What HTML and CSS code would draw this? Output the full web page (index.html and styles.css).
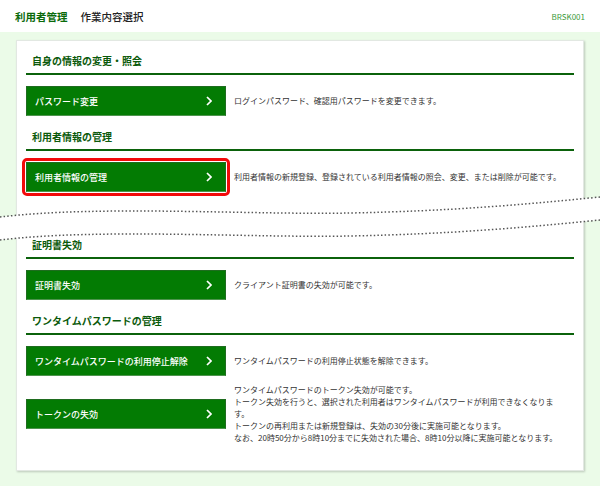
FILE: index.html
```html
<!DOCTYPE html>
<html lang="ja">
<head>
    <meta charset="UTF-8">
    <meta name="viewport" content="width=device-width, initial-scale=1.0">
    <title>作業内容選択</title>
    <link rel="stylesheet" href="styles.css">
</head>
<body>
    <!-- ヘッダー -->
    <div class="page-header">
        <span class="menu-name">利用者管理</span>
        <span class="page-title">作業内容選択</span>
        <span class="screen-id">BRSK001</span>
    </div>

    <div class="main">
        <div class="card">
            <h2 class="section-title">自身の情報の変更・照会</h2>
            <div class="menu-row">
                <a class="menu-btn" href="#">パスワード変更<svg class="chev" viewBox="0 0 6 10"><polyline points="1,1 5,5 1,9"/></svg></a>
                <p class="desc">ログインパスワード、確認用パスワードを変更できます。</p>
            </div>

            <h2 class="section-title">利用者情報の管理</h2>
            <div class="menu-row">
                <a class="menu-btn marked" href="#">利用者情報の管理<svg class="chev" viewBox="0 0 6 10"><polyline points="1,1 5,5 1,9"/></svg></a>
                <p class="desc">利用者情報の新規登録、登録されている利用者情報の照会、変更、または削除が可能です。</p>
            </div>

            <!-- 省略線 -->
            <div class="cut">
                <svg class="cut-line" viewBox="0 0 600 56" width="600" height="56">
                    <path class="cut-fill" d="M0,25 C100,13 250,23 350,21 S520,13 600,5 L600,28 C520,36 450,42 350,44 C250,46 100,36 0,48 Z"/>
                    <path class="cut-dots" d="M0,25 C100,13 250,23 350,21 S520,13 600,5"/>
                    <path class="cut-dots" d="M0,48 C100,36 250,46 350,44 S520,36 600,28"/>
                </svg>
            </div>

            <h2 class="section-title">証明書失効</h2>
            <div class="menu-row">
                <a class="menu-btn" href="#">証明書失効<svg class="chev" viewBox="0 0 6 10"><polyline points="1,1 5,5 1,9"/></svg></a>
                <p class="desc">クライアント証明書の失効が可能です。</p>
            </div>

            <h2 class="section-title">ワンタイムパスワードの管理</h2>
            <div class="menu-row">
                <a class="menu-btn" href="#">ワンタイムパスワードの利用停止解除<svg class="chev" viewBox="0 0 6 10"><polyline points="1,1 5,5 1,9"/></svg></a>
                <p class="desc">ワンタイムパスワードの利用停止状態を解除できます。</p>
            </div>
            <div class="menu-row">
                <a class="menu-btn" href="#">トークンの失効<svg class="chev" viewBox="0 0 6 10"><polyline points="1,1 5,5 1,9"/></svg></a>
                <p class="desc">ワンタイムパスワードのトークン失効が可能です。<br>トークン失効を行うと、選択された利用者はワンタイムパスワードが利用できなくなります。<br>トークンの再利用または新規登録は、失効の30分後に実施可能となります。<br>なお、20時50分から8時10分までに失効された場合、8時10分以降に実施可能となります。</p>
            </div>
        </div>
    </div>
</body>
</html>
```

FILE: styles.css
```css
/* 全体 */
body {
    margin: 0;
    font-family: "Noto Sans CJK JP", "Noto Sans", sans-serif;
    color: #333;
    background-color: #ebfbe8;
    min-height: 486px;
}

/* ヘッダー */
.page-header {
    height: 32px;
    background-color: #fff;
    display: flex;
    align-items: center;
    padding: 0 15px;
    font-size: 10.5px;
    font-weight: bold;
}
.menu-name {
    color: #0a6a0a;
    margin-right: 13px;
}
.page-title {
    color: #222;
    font-weight: 500;
}
.screen-id {
    margin-left: auto;
    font-size: 8px;
    font-weight: normal;
    color: #3b9b3b;
}

/* カード */
.main {
    padding: 8px 16px 17px;
}
.card {
    background-color: #fff;
    border: 1px solid #e2e8e2;
    box-shadow: 1px 1px 2px rgba(0, 0, 0, 0.2);
    padding: 12px 9px 26px 9px;
}

/* 見出し */
.section-title {
    margin: 13px 0 0;
    padding: 0 6px 4px;
    font-size: 10px;
    line-height: 16px;
    font-weight: bold;
    color: #0b5a0b;
    border-bottom: 2px solid #0b620b;
}
.card > .section-title:first-child {
    margin-top: 0;
}

/* メニュー行 */
.menu-row {
    display: flex;
    align-items: center;
    margin-top: 11px;
}
.menu-row + .menu-row {
    margin-top: 8px;
}
.menu-btn {
    position: relative;
    flex: 0 0 auto;
    box-sizing: border-box;
    width: 200px;
    height: 30px;
    display: flex;
    align-items: center;
    padding: 0 8px;
    background-color: #037b03;
    border: 1px solid #1f6c1f;
    border-bottom-color: #4d944d;
    color: #fff;
    font-size: 9px;
    font-weight: 500;
    text-decoration: none;
}
.chev {
    width: 6px;
    height: 10px;
    margin-left: auto;
    margin-right: 5px;
    fill: none;
    stroke: #fff;
    stroke-width: 1.7;
}
/* 赤枠の強調 */
.menu-btn.marked::after {
    content: "";
    position: absolute;
    top: -5px;
    left: -5px;
    right: -5px;
    bottom: -5px;
    border: 3px solid #f20a0a;
    border-radius: 5px;
}
.desc {
    margin: 0 0 0 8px;
    max-width: 332px;
    font-size: 8px;
    line-height: 12px;
    color: #333;
}

/* 省略線 */
.cut {
    position: relative;
    height: 32px;
}
.cut-line {
    position: absolute;
    top: 0;
    left: -26px;
}
.cut-fill {
    fill: #fff;
}
.cut-dots {
    fill: none;
    stroke: #555;
    stroke-width: 1.5;
    stroke-dasharray: 1.5 2.2;
}
```
